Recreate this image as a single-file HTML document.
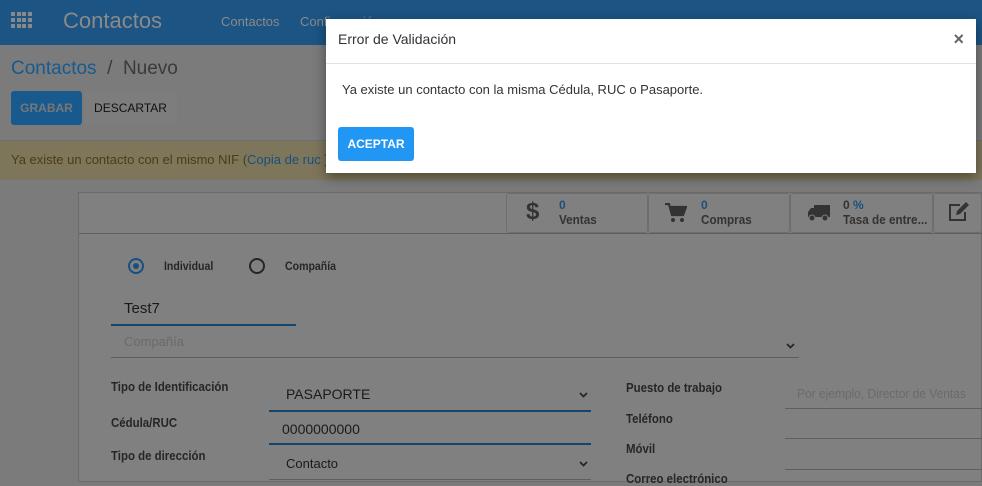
<!DOCTYPE html>
<html><head><meta charset="utf-8"><style>
*{box-sizing:border-box;margin:0;padding:0}
body{width:982px;height:482px;overflow:hidden;background:#7b7b7b;font-family:"Liberation Sans",sans-serif;position:relative;color:#262626}
.abs{position:absolute}
.hdr{left:0;top:0;width:982px;height:45px;background:#1c5484}
.b{font-weight:bold}
.lbl{font-size:13px;font-weight:bold;color:#262626;transform:scaleX(.88);transform-origin:left}
.line{height:1px;background:#5f5f5f}
.bl{height:2px;background:#15456d}
</style></head><body>
<div class="abs hdr"></div>
<div class="abs" style="left:11px;top:12px;width:21px;height:16px;display:grid;grid-template-columns:repeat(4,4px);gap:2px 1.5px">
<i style="background:#888;height:4px"></i><i style="background:#888;height:4px"></i><i style="background:#888;height:4px"></i><i style="background:#888;height:4px"></i>
<i style="background:#888;height:4px"></i><i style="background:#888;height:4px"></i><i style="background:#888;height:4px"></i><i style="background:#888;height:4px"></i>
<i style="background:#888;height:4px"></i><i style="background:#888;height:4px"></i><i style="background:#888;height:4px"></i><i style="background:#888;height:4px"></i>
</div>
<div class="abs" style="left:63px;top:8px;font-size:22px;color:#8a8a8a">Contactos</div>
<div class="abs" style="left:221px;top:14px;font-size:13px;color:#8a8a8a">Contactos</div>
<div class="abs" style="left:300px;top:14px;font-size:13px;color:#8a8a8a">Configuración</div>

<div class="abs" style="left:11px;top:58px;font-size:19px;color:#195a8e">Contactos <span style="color:#3a3a3a">&nbsp;/&nbsp; Nuevo</span></div>
<div class="abs" style="left:11px;top:91px;width:71px;height:34px;background:#195a8e;border-radius:3px;color:#777;font-size:12px;font-weight:bold;text-align:center;line-height:34px">GRABAR</div>
<div class="abs" style="left:84px;top:91px;width:93px;height:34px;background:#7d7d7d;border-radius:3px;color:#111;font-size:12px;text-align:center;line-height:34px">DESCARTAR</div>
<div class="abs" style="left:0;top:140px;width:982px;height:40px;background:#7e765b;border-top:1px solid #6e6e6e"></div>
<div class="abs" style="left:11px;top:152px;font-size:13px;color:#4a3c14">Ya existe un contacto con el mismo NIF (<span style="color:#194f80">Copia de ruc</span> )</div>

<div class="abs" style="left:78px;top:192px;width:904px;height:290px;background:#808080;border:1px solid #6a6a6a"></div>
<div class="abs line" style="left:79px;top:233px;width:903px"></div>
<div class="abs" style="left:506px;top:193px;width:142px;height:40px;border:1px solid #6e6e6e;border-radius:3px"></div>
<div class="abs" style="left:648px;top:193px;width:142px;height:40px;border:1px solid #6e6e6e;border-radius:3px"></div>
<div class="abs" style="left:790px;top:193px;width:143px;height:40px;border:1px solid #6e6e6e;border-radius:3px"></div>
<div class="abs" style="left:933px;top:193px;width:49px;height:40px;border:1px solid #6e6e6e;border-radius:3px"></div>
<div class="abs b" style="left:526px;top:198px;font-size:24px;color:#333">$</div>
<div class="abs b" style="left:559px;top:198px;font-size:12px;color:#194f80">0</div>
<div class="abs" style="left:559px;top:212px;font-size:13px;color:#333;font-weight:bold;transform:scaleX(.9);transform-origin:left">Ventas</div>
<svg class="abs" style="left:665px;top:203px" width="22" height="20" viewBox="0 0 22 20"><path d="M0 1h4l3 11h11l3-8H6" fill="none" stroke="#333" stroke-width="2.2"/><path d="M6 4h15l-3 8H7z" fill="#333"/><circle cx="8" cy="17" r="2" fill="#333"/><circle cx="17" cy="17" r="2" fill="#333"/></svg>
<div class="abs b" style="left:701px;top:198px;font-size:12px;color:#194f80">0</div>
<div class="abs" style="left:701px;top:212px;font-size:13px;color:#333;font-weight:bold;transform:scaleX(.9);transform-origin:left">Compras</div>
<svg class="abs" style="left:807px;top:204px" width="24" height="18" viewBox="0 0 24 18"><path d="M7 1h16v12H7zM1 8l3-4h4v9H1z" fill="#333"/><circle cx="5" cy="14" r="3" fill="#333" stroke="#808080"/><circle cx="18" cy="14" r="3" fill="#333" stroke="#808080"/></svg>
<div class="abs b" style="left:843px;top:198px;font-size:12px;color:#333">0 <span style="color:#194f80">%</span></div>
<div class="abs" style="left:843px;top:212px;font-size:13px;color:#333;font-weight:bold;transform:scaleX(.9);transform-origin:left">Tasa de entre...</div>
<svg class="abs" style="left:948px;top:202px" width="22" height="20" viewBox="0 0 22 20"><path d="M12 3H2v15h15v-8" fill="none" stroke="#333" stroke-width="2"/><path d="M8 13l1-4 9-9 3 3-9 9z" fill="#333"/></svg>

<div class="abs" style="left:128px;top:258px;width:16px;height:16px;border:2px solid #194f80;border-radius:50%"><div style="margin:3px;width:6px;height:6px;border-radius:50%;background:#194f80"></div></div>
<div class="abs lbl" style="left:164px;top:259px;font-size:12px">Individual</div>
<div class="abs" style="left:249px;top:258px;width:16px;height:16px;border:2px solid #262626;border-radius:50%"></div>
<div class="abs lbl" style="left:285px;top:259px;font-size:12px">Compañía</div>
<div class="abs" style="left:124px;top:300px;font-size:15px;color:#1a1a1a">Test7</div>
<div class="abs bl" style="left:111px;top:324px;width:185px"></div>
<div class="abs" style="left:124px;top:334px;font-size:13px;color:#6a6a6a">Compañía</div>
<svg class="abs" style="left:786px;top:343px" width="9" height="6" viewBox="0 0 9 6"><path d="M1 1l3.5 3.5L8 1" fill="none" stroke="#262626" stroke-width="1.8"/></svg>
<div class="abs line" style="left:111px;top:357px;width:688px"></div>

<div class="abs lbl" style="left:111px;top:379px">Tipo de Identificación</div>
<div class="abs" style="left:286px;top:386px;font-size:14px;color:#1a1a1a">PASAPORTE</div>
<svg class="abs" style="left:579px;top:392px" width="9" height="6" viewBox="0 0 9 6"><path d="M1 1l3.5 3.5L8 1" fill="none" stroke="#262626" stroke-width="1.8"/></svg>
<div class="abs bl" style="left:269px;top:410px;width:322px"></div>
<div class="abs lbl" style="left:111px;top:415px">Cédula/RUC</div>
<div class="abs" style="left:282px;top:421px;font-size:14px;color:#1a1a1a">0000000000</div>
<div class="abs bl" style="left:269px;top:443px;width:322px"></div>
<div class="abs lbl" style="left:111px;top:448px">Tipo de dirección</div>
<div class="abs" style="left:286px;top:456px;font-size:13px;color:#1a1a1a">Contacto</div>
<svg class="abs" style="left:579px;top:461px" width="9" height="6" viewBox="0 0 9 6"><path d="M1 1l3.5 3.5L8 1" fill="none" stroke="#262626" stroke-width="1.8"/></svg>
<div class="abs line" style="left:269px;top:479px;width:322px"></div>

<div class="abs lbl" style="left:626px;top:380px">Puesto de trabajo</div>
<div class="abs" style="left:797px;top:386px;font-size:13px;color:#6a6a6a;transform:scaleX(.92);transform-origin:left">Por ejemplo, Director de Ventas</div>
<div class="abs line" style="left:785px;top:408px;width:197px"></div>
<div class="abs lbl" style="left:626px;top:411px">Teléfono</div>
<div class="abs line" style="left:785px;top:438px;width:197px"></div>
<div class="abs lbl" style="left:626px;top:441px">Móvil</div>
<div class="abs line" style="left:785px;top:469px;width:197px"></div>
<div class="abs lbl" style="left:626px;top:471px">Correo electrónico</div>

<div class="abs" style="left:326px;top:19px;width:650px;height:154px;background:#fff;box-shadow:0 4px 12px rgba(0,0,0,.4)">
<div style="position:absolute;left:12px;top:12px;font-size:14px;color:#333">Error de Validación</div>
<div style="position:absolute;right:12px;top:10px;font-size:18px;color:#666;font-weight:bold">×</div>
<div style="position:absolute;left:0;top:44px;width:100%;height:1px;background:#e2e2e2"></div>
<div style="position:absolute;left:16px;top:63px;font-size:13px;color:#333">Ya existe un contacto con la misma Cédula, RUC o Pasaporte.</div>
<div style="position:absolute;left:12px;top:108px;width:76px;height:34px;background:#2196f3;border-radius:3px;color:#fff;font-size:12px;font-weight:bold;text-align:center;line-height:34px">ACEPTAR</div>
</div>
</body></html>
